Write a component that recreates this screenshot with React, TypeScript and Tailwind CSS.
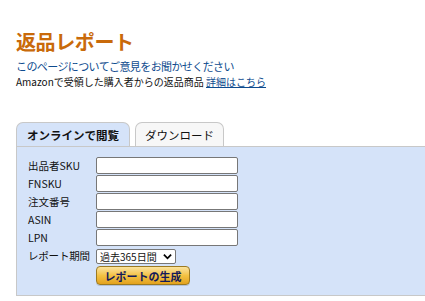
import React, { useState } from 'react';

const fields = ['出品者SKU', 'FNSKU', '注文番号', 'ASIN', 'LPN'];

export default function App() {
  const [tab, setTab] = useState('online');
  const [period, setPeriod] = useState('365');

  return (
    <div
      className="w-[425px] h-[301px] overflow-hidden bg-white pt-[30px] pl-[16px] text-[#111]"
      style={{ fontFamily: '"Noto Sans CJK JP", "Noto Sans", sans-serif' }}
    >
      <h1 className="h-[24px] text-[20px] leading-[24px] font-bold text-[#c96a0a] tracking-[-0.4px]">
        返品レポート
      </h1>
      <p className="mt-[4px] h-[17px] text-[11px] leading-[17px] text-[#0e4b8e] tracking-[-0.6px]">
        このページについてご意見をお聞かせください
      </p>
      <p className="h-[14px] text-[10px] leading-[14px]">
        Amazonで受領した購入者からの返品商品{' '}
        <a href="#" className="text-[#0e4b8e] underline">
          詳細はこちら
        </a>
      </p>

      <div className="mt-[33px] flex items-end gap-[5px] h-[24px]">
        <button
          onClick={() => setTab('online')}
          className={`h-[24px] px-[10px] rounded-t-[7px] border border-b-0 border-[#c8c8c8] text-[11.5px] leading-[22px] font-bold ${
            tab === 'online' ? 'bg-[#d5e3f9]' : 'bg-[#f7f7f7]'
          }`}
        >
          オンラインで閲覧
        </button>
        <button
          onClick={() => setTab('download')}
          className={`h-[24px] w-[89px] rounded-t-[7px] border border-b-0 border-[#c8c8c8] text-[11.5px] leading-[22px] ${
            tab === 'download' ? 'bg-[#d5e3f9]' : 'bg-[#f7f7f7]'
          }`}
        >
          ダウンロード
        </button>
      </div>

      <div className="h-[150px] bg-[#d5e3f9] border-l border-b border-t border-[#c8c8c8] pt-[10px] pl-[11px]">
        <div className="grid grid-cols-[68px_142px] gap-y-[1px] items-center">
          {fields.map((f) => (
            <React.Fragment key={f}>
              <label className="text-[10.5px] leading-[17px]">{f}</label>
              <input
                type="text"
                className="block h-[17px] w-[142px] bg-white border border-[#777] rounded-[2px] px-1 text-[11px] outline-none"
              />
            </React.Fragment>
          ))}
          <label className="text-[10.5px] leading-[16px] mt-[1px] tracking-[-0.2px]">レポート期間</label>
          <div className="relative mt-[1px] h-[15px] w-[80px]">
            <select
              value={period}
              onChange={(e) => setPeriod(e.target.value)}
              className="block appearance-none h-[15px] w-[80px] bg-white border border-[#777] rounded-[2px] text-[10px] leading-[13px] py-0 pl-[3px] outline-none"
            >
              <option value="365">過去365日間</option>
              <option value="30">過去30日間</option>
              <option value="7">過去7日間</option>
            </select>
            <svg
              viewBox="0 0 10 10"
              className="pointer-events-none absolute right-[4px] top-[3px] w-[9px] h-[9px]"
            >
              <path d="M1 3 L5 7 L9 3" fill="none" stroke="#000" strokeWidth="2" />
            </svg>
          </div>
          <div />
          <button className="block mt-[1px] h-[19px] w-[94px] rounded-[4px] border border-[#9c7a22] bg-gradient-to-b from-[#fbe39c] via-[#f3c243] to-[#e3a21c] text-[11px] leading-[16px] font-bold text-[#141a5a] shadow-[0_1px_0_rgba(0,0,0,0.15)]">
            レポートの生成
          </button>
        </div>
      </div>
    </div>
  );
}
